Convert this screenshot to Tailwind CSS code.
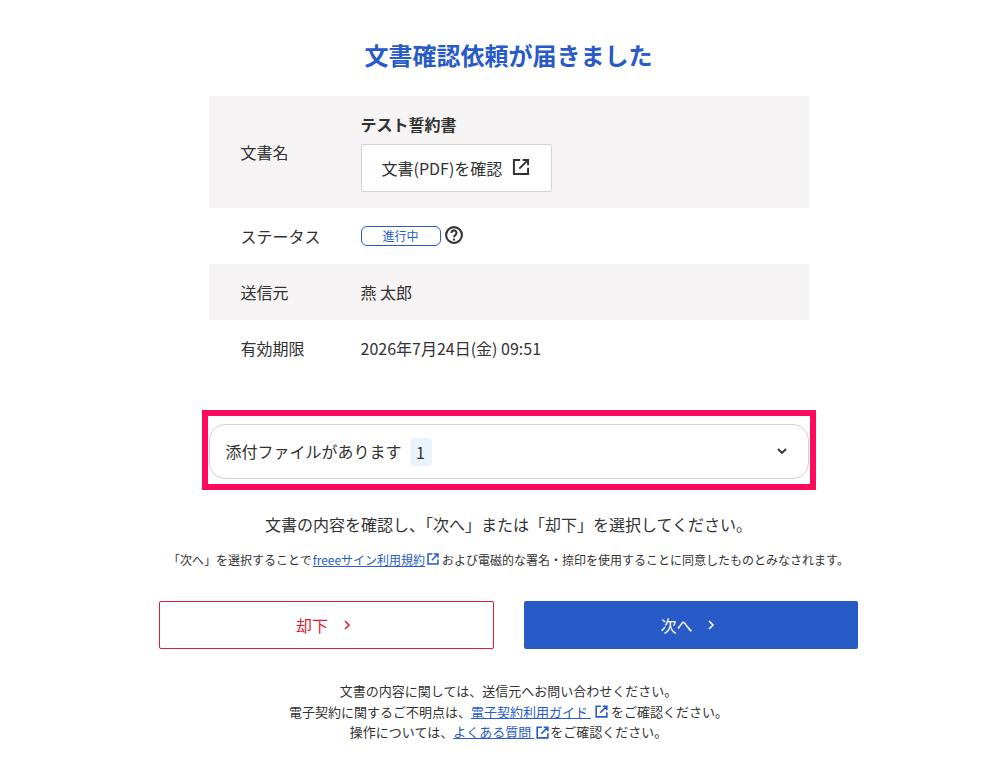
<!doctype html>
<html lang="ja">
<head>
<meta charset="utf-8">
<script src="https://cdn.jsdelivr.net/npm/@tailwindcss/browser@4"></script>
</head>
<body class="bg-white overflow-hidden font-['Noto_Sans_CJK_JP','Noto_Sans',sans-serif] text-[#323232]">
<main class="relative h-[779px] w-[1008px]">
  <div class="ml-[159px] flex w-[699px] flex-col items-center">
    <h1 class="mt-[37px] h-[36px] text-[24px] leading-[36px] font-bold text-[#285ac8]">文書確認依頼が届きました</h1>
    <div class="mt-[23px] w-[600px] text-[16px] leading-[24px]">
      <div class="flex h-[112px] items-center bg-[#f5f3f3] pl-[32px]">
        <div class="w-[120px]">文書名</div>
        <div class="flex flex-col items-start">
          <div class="-mt-[1px] font-bold">テスト誓約書</div>
          <a class="mt-[8px] flex h-[48px] w-[191px] items-center rounded-[2px] border border-[#d7d2d2] bg-white pl-[20px]">文書(PDF)を確認
            <svg class="ml-[9px] mb-[2px]" width="20" height="20" viewBox="0 0 24 24" fill="none" stroke="#323232" stroke-width="2.4"><path d="M11 3.5H3.5v17h17V13M14 3.5h6.5V10M20.5 3.5 10 14"/></svg>
          </a>
        </div>
      </div>
      <div class="flex h-[56px] items-center pl-[32px]">
        <div class="w-[120px]">ステータス</div>
        <div class="mb-[1px] flex items-center">
          <span class="flex h-[20px] w-[80px] items-center justify-center rounded-[6px] border border-[#285ac8] text-[12px] leading-none text-[#285ac8]">進行中</span>
          <svg class="ml-[3px] mb-[1px]" width="20" height="20" viewBox="0 0 24 24" fill="none" stroke="#323232" stroke-width="2.5"><circle cx="12" cy="12" r="9.5"/><path d="M9 9.5a3 3 0 1 1 4.6 2.5c-1 .7-1.6 1.3-1.6 2.6"/><circle cx="12" cy="17.6" r="1.3" fill="#323232" stroke="none"/></svg>
        </div>
      </div>
      <div class="flex h-[56px] items-center bg-[#f5f3f3] pl-[32px]">
        <div class="w-[120px]">送信元</div><div>燕 太郎</div>
      </div>
      <div class="flex h-[56px] items-center pl-[32px]">
        <div class="w-[120px]">有効期限</div><div>2026年7月24日(金) 09:51</div>
      </div>
    </div>
    <div class="mt-[48px] flex h-[55px] w-[600px] items-center rounded-[16px] border border-[#d7d2d2] bg-white pl-[16px] pr-[20px] text-[16px]">
      <span class="mb-[2px]">添付ファイルがあります</span>
      <span class="ml-[8px] flex h-[28px] w-[22px] items-center justify-center rounded-[4px] bg-[#ebf3fc]">1</span>
      <svg class="mb-[2px] ml-auto" width="12" height="12" viewBox="0 0 12 12" fill="none" stroke="#323232" stroke-width="1.8"><path d="M2 4l4 4 4-4"/></svg>
    </div>
    <p class="mt-[33px] text-[16px] leading-[24px]">文書の内容を確認し、「次へ」または「却下」を選択してください。</p>
    <p class="mt-[15px] flex items-center text-[12px] leading-[18px] whitespace-nowrap">「次へ」を選択することで<a class="ml-[1px] text-[#285ac8] underline">freeeサイン利用規約</a>
      <svg class="mb-[3px] ml-[1px] mr-[2px]" width="14" height="14" viewBox="0 0 24 24" fill="none" stroke="#285ac8" stroke-width="2.6"><path d="M11 3.5H3.5v17h17V13M14 3.5h6.5V10M20.5 3.5 10 14"/></svg>および電磁的な署名・捺印を使用することに同意したものとみなされます。</p>
    <div class="mt-[32px] flex w-full justify-between">
      <a class="flex h-[48px] w-[335px] items-center justify-center rounded-[2px] border border-[#dc1e32] bg-white pr-[3px] text-[16px] text-[#dc1e32]">却下
        <svg class="ml-[12px]" width="14" height="14" viewBox="0 0 14 14" fill="none" stroke="#dc1e32" stroke-width="1.6"><path d="M5 3l4 4-4 4"/></svg>
      </a>
      <a class="flex h-[48px] w-[334px] items-center justify-center rounded-[2px] bg-[#285ac8] pr-[4px] text-[16px] text-white">次へ
        <svg class="ml-[11px]" width="14" height="14" viewBox="0 0 14 14" fill="none" stroke="#ffffff" stroke-width="1.6"><path d="M5 3l4 4-4 4"/></svg>
      </a>
    </div>
    <div class="mt-[32px] flex flex-col items-center text-[13px] leading-[20.5px] whitespace-nowrap">
      <p>文書の内容に関しては、送信元へお問い合わせください。</p>
      <p class="flex items-center">電子契約に関するご不明点は、<a class="whitespace-pre text-[#285ac8] underline">電子契約利用ガイド </a>
        <svg class="ml-[3px] mr-[2px]" width="15" height="15" viewBox="0 0 24 24" fill="none" stroke="#285ac8" stroke-width="2.6"><path d="M11 3.5H3.5v17h17V13M14 3.5h6.5V10M20.5 3.5 10 14"/></svg>をご確認ください。</p>
      <p class="flex items-center">操作については、<a class="whitespace-pre text-[#285ac8] underline">よくある質問 </a>
        <svg class="ml-[1px]" width="15" height="15" viewBox="0 0 24 24" fill="none" stroke="#285ac8" stroke-width="2.6"><path d="M11 3.5H3.5v17h17V13M14 3.5h6.5V10M20.5 3.5 10 14"/></svg>をご確認ください。</p>
    </div>
  </div>
  <div class="pointer-events-none absolute left-[202px] top-[410px] h-[80px] w-[614px] border-[6px] border-[#ff0a5a]"></div>
</main>
</body>
</html>
